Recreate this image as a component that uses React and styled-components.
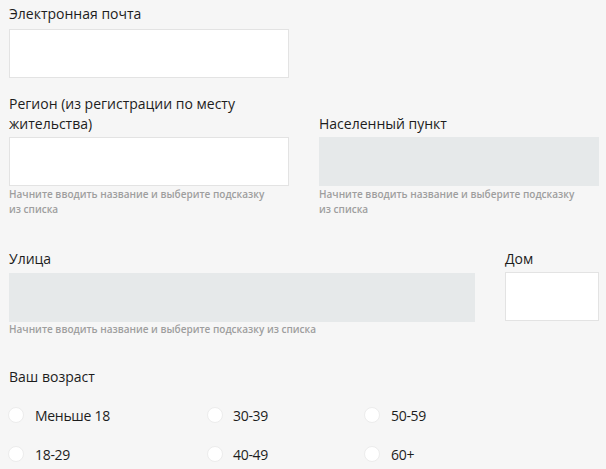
import React from "react";
import styled, { createGlobalStyle } from "styled-components";

const GlobalStyle = createGlobalStyle`
  body {
    margin: 0;
    background: #f6f6f6;
    font-family: "Open Sans", "Liberation Sans", sans-serif;
    color: #1d1d1d;
  }
`;

const Form = styled.div`
  padding: 4px 7px 0 9px;
  display: flex;
  flex-direction: column;
`;

const Row = styled.div`
  display: grid;
  grid-template-columns: ${(p) => p.$cols};
  column-gap: 30px;
  align-items: ${(p) => p.$align || "start"};
  margin-bottom: ${(p) => p.$gap || 0}px;
`;

const Field = styled.div`
  display: flex;
  flex-direction: column;
`;

const Label = styled.div`
  font-size: 14px;
  line-height: 20px;
  margin-bottom: ${(p) => p.$mb ?? 4}px;
`;

const Input = styled.div`
  height: 49px;
  box-sizing: border-box;
  border: 1px solid ${(p) => (p.$disabled ? "#e6e9ea" : "#e3e3e3")};
  background: ${(p) => (p.$disabled ? "#e6e9ea" : "#fff")};
`;

const Hint = styled.div`
  font-size: 10px;
  font-weight: 600;
  line-height: 15px;
  color: #9e9e9e;
  max-width: ${(p) => (p.$wide ? "none" : "262px")};
  height: ${(p) => (p.$lines || 1) * 15}px;
  margin-top: ${(p) => (p.$wide ? 0 : 1)}px;
`;

const AgeTitle = styled.div`
  font-size: 14px;
  line-height: 20px;
  margin-bottom: 18px;
`;

const RadioGrid = styled.div`
  display: grid;
  grid-template-columns: 199px 157px 1fr;
  row-gap: 19px;
`;

const RadioItem = styled.label`
  display: flex;
  align-items: center;
  height: 20px;
  font-size: 14px;
  letter-spacing: -0.3px;
  margin-left: -1px;
`;

const Circle = styled.span`
  width: 16px;
  height: 16px;
  box-sizing: border-box;
  border-radius: 50%;
  background: #fff;
  border: 1px solid #ececec;
  margin-right: ${(p) => p.$mr}px;
  flex-shrink: 0;
`;

const ages = [
  ["Меньше 18", 11],
  ["30-39", 10],
  ["50-59", 11],
  ["18-29", 11],
  ["40-49", 10],
  ["60+", 11],
];

const App = () => {
  return (
    <>
      <GlobalStyle />
      <Form>
        <Row $cols="280px" $gap={16}>
          <Field>
            <Label $mb={5}>Электронная почта</Label>
            <Input />
          </Field>
        </Row>
        <Row $cols="280px 280px" $align="end" $gap={32}>
          <Field>
            <Label $mb={3}>Регион (из регистрации по месту жительства)</Label>
            <Input />
            <Hint $lines={2}>Начните вводить название и выберите подсказку из списка</Hint>
          </Field>
          <Field>
            <Label $mb={3}>Населенный пункт</Label>
            <Input $disabled />
            <Hint $lines={2}>Начните вводить название и выберите подсказку из списка</Hint>
          </Field>
        </Row>
        <Row $cols="466px 94px" $gap={30}>
          <Field>
            <Label>Улица</Label>
            <Input $disabled />
            <Hint $wide>Начните вводить название и выберите подсказку из списка</Hint>
          </Field>
          <Field>
            <Label $mb={3}>Дом</Label>
            <Input />
          </Field>
        </Row>
        <AgeTitle>Ваш возраст</AgeTitle>
        <RadioGrid>
          {ages.map(([text, mr]) => (
            <RadioItem key={text}>
              <Circle $mr={mr} />
              {text}
            </RadioItem>
          ))}
        </RadioGrid>
      </Form>
    </>
  );
};

export default App;
